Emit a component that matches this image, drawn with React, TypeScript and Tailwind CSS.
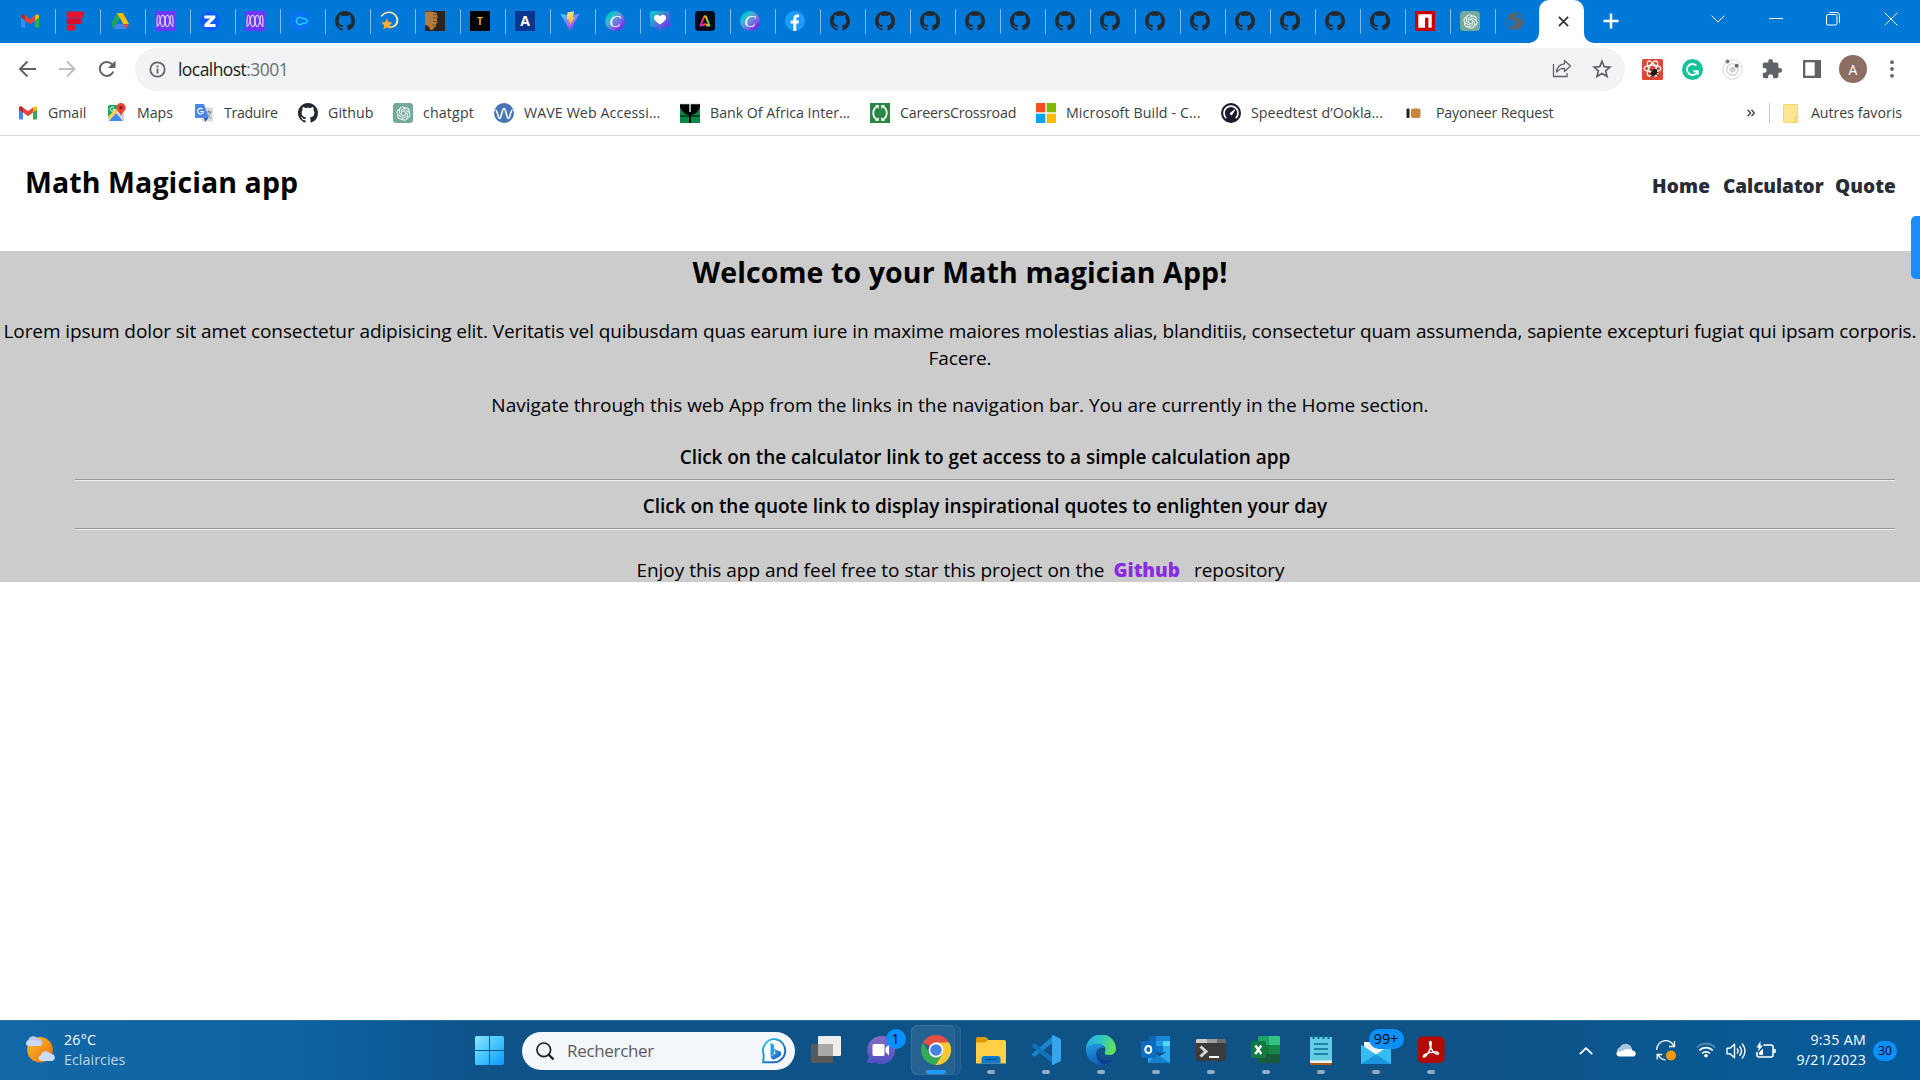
import type { ReactNode } from "react";
import { RiOpenaiFill } from "react-icons/ri";

type IconProps = { className?: string };

/* ---------- site icons ---------- */

const Gmail = ({ className = "size-5" }: IconProps) => (
  <svg viewBox="0 0 20 20" className={className}>
    <path d="M1 5.2V15.4a1.2 1.2 0 0 0 1.2 1.2H5V8.6z" fill="#4285f4" />
    <path d="M19 5.2V15.4a1.2 1.2 0 0 1-1.2 1.2H15V8.6z" fill="#34a853" />
    <path d="M15 4.6v4.8l4-3V5c0-1.7-1.9-2.4-3-1.3z" fill="#fbbc04" />
    <path d="M5 9.4V4.4l5 3.8 5-3.8v5l-5 3.8z" fill="#ea4335" />
    <path d="M1 5v1.4l4 3V4.4l-1-.7C2.900 2.800 1 3.300 1 5z" fill="#c5221f" />
  </svg>
);

const RedBars = () => (
  <svg viewBox="0 0 20 20" className="size-5">
    <path d="M2.500.5h16q.7 0 .7.7L18.500 6q-.1.700-.8.700H2.500q-.8 0-.8-.8V1.300q0-.8.8-.8z" fill="#e8122f" />
    <path d="M2.500 7.300H16q.7 0 .7.700l-.4 4.300q-.1.700-.8.700h-13q-.8 0-.8-.8V8.100q0-.8.8-.8z" fill="#d80f2b" />
    <path d="M2.500 13.600h7q.7 0 .7.700l-.4 4.400q-.1.700-.8.700H2.500q-.8 0-.8-.8v-4.200q0-.8.8-.8z" fill="#e8122f" />
  </svg>
);

const Drive = () => (
  <svg viewBox="0 0 20 20" className="size-5">
    <path d="M7 2h6L4 18 1 13z" fill="#1ea362" />
    <path d="M7 2h6l6 11h-6z" fill="#fbbc04" />
    <path d="M6.500 13H19l-3 5H4z" fill="#4285f4" />
    <path d="M13.500 13H19l-3 5z" fill="#ea4335" />
    <path d="M10 7.300 6.800 13h6.300z" fill="#0078d7" />
  </svg>
);

const PurpleM = () => (
  <svg viewBox="0 0 20 20" className="size-5">
    <rect width="20" height="20" fill="#6f36ff" />
    <g fill="none" stroke="#dccfff" strokeWidth="1.200">
      <path d="M1.800 15.500C3.500 15.500 4.500 12 5 9.500S6.300 4.300 7.600 4.300 9.800 7 9.800 10s-1 5.600-2.300 5.600S5.600 12.500 5.200 10" />
      <path d="M18.200 15.500c-1.700 0-2.700-3.500-3.200-6s-1.300-5.200-2.600-5.200S10.200 7 10.200 10s1 5.600 2.300 5.600 1.900-3.100 2.300-5.600" />
      <path d="M5.200 10C4.900 7 4.600 4.400 3.600 4.400S2 8 2 10.500s0 4 .3 5M14.800 10c.3-3 .6-5.600 1.600-5.600S18 8 18 10.500s0 4-.3 5" />
    </g>
  </svg>
);

const ZBadge = () => (
  <svg viewBox="0 0 20 20" className="size-5">
    <circle cx="10" cy="10" r="10" fill="#0b5cff" />
    <path d="M4.300 4.500h11v2.600l-5.800 6h6v2.900H4.400v-2.700l5.700-5.900H4.300z" fill="#fff" />
  </svg>
);

const ClickRing = () => (
  <svg viewBox="0 0 20 20" className="size-5">
    <circle cx="10" cy="10" r="10" fill="#0a73f5" />
    <path d="M12.800 7.800a3.600 3.600 0 1 0 0 4.400M12 7.600h3.200l2.300 2.400-2.300 2.400H12" fill="none" stroke="#16d8f5" strokeWidth="1.400" strokeLinejoin="round" />
  </svg>
);

const GithubMark = ({ className = "size-5" }: IconProps) => (
  <svg viewBox="0 0 16 16" className={className} fill="#24292f">
    <path d="M8 0C3.580 0 0 3.580 0 8c0 3.540 2.290 6.530 5.470 7.590.4.070.55-.17.55-.38 0-.19-.01-.82-.01-1.490-2.010.37-2.530-.49-2.690-.94-.09-.23-.48-.94-.82-1.130-.28-.15-.68-.52-.01-.53.63-.01 1.080.58 1.230.82.72 1.210 1.870.87 2.330.66.07-.52.28-.87.51-1.070-1.780-.2-3.640-.89-3.640-3.950 0-.87.31-1.590.82-2.150-.08-.2-.36-1.020.08-2.120 0 0 .67-.21 2.200.82.64-.18 1.320-.27 2-.27s1.360.09 2 .27c1.530-1.040 2.200-.82 2.200-.82.44 1.100.16 1.920.08 2.120.51.56.82 1.270.82 2.150 0 3.070-1.870 3.750-3.650 3.950.29.25.54.73.54 1.480 0 1.070-.01 1.930-.01 2.200 0 .21.15.46.55.38A8.010 8.010 0 0 0 16 8c0-4.420-3.580-8-8-8z" />
  </svg>
);

const DizzyStar = () => (
  <svg viewBox="0 0 20 20" className="size-5 overflow-visible">
    <path d="M1.500 5C5 .8 12-.5 15.500 4.500s2.500 11-5 11.500" fill="none" stroke="#ffe3a0" strokeWidth="1.500" strokeLinecap="round" />
    <path d="M14.500 3.500c3.500 3.500 3 10.500-4 12.500 7 .500 8.500-6 7.500-9-.7-2-2-3-3.500-3.500z" fill="#ffe3a0" />
    <path d="m7 7.500 1.700 3.600 4 .4-3 2.600 1 4.200L7 16.200l-3.600 2.100.8-4.200L1 11.500l4.200-.4z" fill="#ffac33" />
  </svg>
);

const Fist = () => (
  <svg viewBox="0 0 20 20" className="size-5">
    <rect width="20" height="20" fill="#2b241f" />
    <path d="M0 1c4-1 9 0 12 1l.6 5-.8 1 .7 4-1.300 1-.5 3-1.700.5-1 2-3 .5Q5 15 0 14z" fill="#b57a3e" />
    <path d="M8 3.500h4M8 7h4M8 10.500h4M7 14h4" stroke="#6b431f" strokeWidth="0.800" />
  </svg>
);

const LetterTile = ({ letter, tone }: { letter: string; tone: string }) => (
  <span className={`flex size-5 items-center justify-center font-['Open_Sans'] leading-none ${tone}`}>{letter}</span>
);

const Vite = () => (
  <svg viewBox="0 0 20 20" className="size-5">
    <defs>
      <linearGradient id="vite-a" x1="0" y1="0" x2="0.6" y2="1">
        <stop offset="0" stopColor="#41d1ff" />
        <stop offset="1" stopColor="#bd34fe" />
      </linearGradient>
      <linearGradient id="vite-b" x1="0" y1="0" x2="0" y2="1">
        <stop offset="0" stopColor="#ffea83" />
        <stop offset="1" stopColor="#ffa800" />
      </linearGradient>
    </defs>
    <path d="M.3 2.800 10 19.800l9.700-17L10.500 4.500z" fill="url(#vite-a)" />
    <path d="m14.200.2-6.800 1.300-.5 7.200 2.200-.4-.6 3 1.600-.5-1 4.500L15 6.300l-2.500.4z" fill="url(#vite-b)" />
  </svg>
);

const Canva = () => (
  <span className="flex size-5 items-center justify-center rounded-full bg-linear-to-br from-[#00c4cc] from-25% to-[#7d2ae8] to-80% font-['Liberation_Serif'] text-[17px] leading-none italic text-white">
    C
  </span>
);

const HeartChat = () => (
  <svg viewBox="0 0 20 20" className="size-5">
    <defs>
      <linearGradient id="heart-a" x1="0" y1="0" x2="1" y2="1">
        <stop offset="0.1" stopColor="#0fc5c9" />
        <stop offset="0.85" stopColor="#7c33e8" />
      </linearGradient>
    </defs>
    <path d="M2 0h16a2 2 0 0 1 2 2v12a2 2 0 0 1-2 2h-5l-3 4-3-4H2a2 2 0 0 1-2-2V2a2 2 0 0 1 2-2z" fill="url(#heart-a)" />
    <path d="M10 13.500C5 10 4 8.500 4 6.800 4 3.600 8.500 2.700 10 5.600c1.500-2.900 6-2 6 1.200 0 1.700-1 3.200-6 6.700z" fill="#fff" />
  </svg>
);

const RainbowA = () => (
  <svg viewBox="0 0 20 20" className="size-5">
    <defs>
      <linearGradient id="rb" x1="0" y1="1" x2="1" y2="0.8">
        <stop offset="0" stopColor="#b32bff" />
        <stop offset="0.3" stopColor="#ff2d55" />
        <stop offset="0.55" stopColor="#ff5a1f" />
        <stop offset="0.75" stopColor="#ffd000" />
        <stop offset="1" stopColor="#2fd06a" />
      </linearGradient>
    </defs>
    <rect width="20" height="20" rx="3.500" fill="#000b1d" />
    <path d="M5.500 14.500 8.800 6.300q1.200-2 2.400 0l3.300 8.200h-2q-2.500-2.500-4.700-.2z" fill="none" stroke="url(#rb)" strokeWidth="2" strokeLinejoin="round" />
  </svg>
);

const Facebook = () => (
  <svg viewBox="0 0 20 20" className="size-5">
    <circle cx="10" cy="10" r="10" fill="#1b9bfa" />
    <path d="M8.300 20v-7.500H5.700V9.600h2.600V7.500c0-2.700 1.500-4 3.800-4 .9 0 1.700.1 2 .2v2.600h-1.300c-1.100 0-1.500.6-1.500 1.500v1.800h2.700l-.5 2.900h-2.200V20z" fill="#fff" />
  </svg>
);

const Npm = () => (
  <svg viewBox="0 0 20 20" className="size-5">
    <rect width="20" height="20" fill="#cb0000" />
    <path d="M3.300 3.300h13.400v13.400h-3.300V6.700h-3.300v10H3.300z" fill="#fff" />
  </svg>
);

const ChatGpt = ({ className = "rounded-[3px]" }: IconProps) => (
  <span className={`flex size-5 items-center justify-center bg-[#74aa9c] ${className}`}>
    <RiOpenaiFill className="size-[17px] text-white" />
  </span>
);

const Globe = () => (
  <svg viewBox="0 0 20 20" className="size-5">
    <circle cx="10" cy="10" r="8.700" fill="#5f6368" />
    <path d="M3 8.500q2.500-.5 4 .5 2 1 3.500.500 1 1.500-.5 2.500-1.500.5-1.500 2 .5 1.500 0 2.700C5 16 3 13 3 10zM9 3.500q2.500.2 2 2-.5 1.500 1.500 1.500 2.500.3 2.500 2 1 1.500 2 1 .3-4-2.500-5.700Q12 2.800 9 3.500z" fill="#0078d7" />
  </svg>
);

/* ---------- bookmark icons ---------- */

const Maps = () => (
  <svg viewBox="0 0 20 20" className="size-5">
    <rect x="1" y="2" width="16" height="16" rx="1.500" fill="#dfe5e3" />
    <path d="M2.500 2H13L1 14V3.500A1.500 1.500 0 0 1 2.500 2z" fill="#1fa463" />
    <path d="M9 10 2 18h14z" fill="#4688f1" />
    <path d="M1 14 12 3l2 2L2 17z" fill="#ffd04b" />
    <path d="m10 10 7 7v-6l-4-4z" fill="#c9d0ce" />
    <path d="M7 4.600a2.200 2.200 0 1 0 .6 1.700H5.600" fill="none" stroke="#fff" />
    <path d="M14 0a4.700 4.700 0 0 0-4.700 4.700C9.300 8 13 9 14 13c1-4 4.700-5 4.700-8.300A4.700 4.700 0 0 0 14 0z" fill="#ea4335" />
    <circle cx="14" cy="4.700" r="1.700" fill="#7a2018" />
  </svg>
);

const Translate = () => (
  <svg viewBox="0 0 20 20" className="size-5">
    <rect x="8" y="4.500" width="11" height="14" rx="1" fill="#dcdcdc" />
    <path d="M11.500 9h6M14.500 7.500V9m2 0c-.5 2.500-2.500 4.500-4 5.500m0-4.500c.8 2 2.500 4 4.300 5" fill="none" stroke="#607d8b" />
    <path d="M2 1h8l4.500 14H2a1 1 0 0 1-1-1V2a1 1 0 0 1 1-1z" fill="#4a85ee" />
    <path d="m10 15 4.500 0-3.500 4z" fill="#3458b0" />
    <path d="M8.500 6.200a2.800 2.800 0 1 0 .8 2.300H6.500" fill="none" stroke="#fff" strokeWidth="1.200" />
  </svg>
);

const Wave = () => (
  <svg viewBox="0 0 20 20" className="size-5">
    <circle cx="10" cy="10" r="10" fill="#4775b8" />
    <path d="M1.500 7c1.800 0 2.500 8.500 4.200 8.500S8 5.500 10 5.500s2.600 10 4.300 10S16.800 7 18.500 7" fill="none" stroke="#fff" strokeWidth="1.600" />
  </svg>
);

const BankAfrica = () => (
  <svg viewBox="0 0 20 20" className="size-5">
    <rect width="20" height="20" fill="#038a45" />
    <path d="M0 1h20v3q-2.500 7-9 8v8H9v-8Q2.500 11 0 4z" fill="#000" />
    <path d="M0 13h20" stroke="#000" strokeWidth="1" />
    <path d="M0 0h20v1.200H0zM9.300 1h1.400v8H9.300z" fill="#e8f3ec" />
  </svg>
);

const Careers = () => (
  <svg viewBox="0 0 20 20" className="size-5">
    <rect width="20" height="20" fill="#2a8644" />
    <path d="M7 3.500a7.500 7.500 0 0 0 0 13M13 3.500a7.500 7.500 0 0 1 0 13" fill="none" stroke="#fff" strokeWidth="1.800" />
    <path d="M5 2h3.700v4zM15 2h-3.700v4zM5 18h3.700v-4zM15 18h-3.700v-4z" fill="#fff" />
  </svg>
);

const Microsoft = () => (
  <svg viewBox="0 0 20 20" className="size-5">
    <path d="M0 0h9.300v9.300H0z" fill="#f25022" />
    <path d="M10.700 0H20v9.300h-9.300z" fill="#7fba00" />
    <path d="M0 10.700h9.300V20H0z" fill="#00a4ef" />
    <path d="M10.700 10.700H20V20h-9.300z" fill="#ffb900" />
  </svg>
);

const Speedtest = () => (
  <svg viewBox="0 0 20 20" className="size-5">
    <circle cx="10" cy="10" r="10" fill="#1a1b2e" />
    <path d="M5.200 15.200a7 7 0 1 1 9.600 0" fill="none" stroke="#fff" strokeWidth="1.800" />
    <path d="m13.800 6.800-3.200 5.200-1.700-1.500z" fill="#fff" stroke="#fff" strokeLinejoin="round" />
  </svg>
);

const Payoneer = () => (
  <svg viewBox="0 0 20 20" className="size-5">
    <rect x="0.500" y="5.500" width="3" height="9.500" rx="1" fill="#222" />
    <rect x="5" y="5.500" width="9.500" height="9.500" rx="2" fill="#c4873d" />
  </svg>
);

/* ---------- tab strip ---------- */

const tabIcons: ReactNode[] = [
  <Gmail />,
  <RedBars />,
  <Drive />,
  <PurpleM />,
  <ZBadge />,
  <PurpleM />,
  <ClickRing />,
  <GithubMark />,
  <DizzyStar />,
  <Fist />,
  <LetterTile letter="T" tone="bg-black text-[#e8b21c] text-[10px] font-bold" />,
  <LetterTile letter="A" tone="bg-[#0b3490] text-white text-[14px] font-bold" />,
  <Vite />,
  <Canva />,
  <HeartChat />,
  <RainbowA />,
  <Canva />,
  <Facebook />,
  ...Array.from({ length: 13 }, () => <GithubMark />),
  <Npm />,
  <ChatGpt className="rounded-[4px]" />,
  <Globe />,
];

const TabStrip = () => (
  <div className="flex h-[43px] bg-[#0078d7] pl-2.5">
    {tabIcons.map((icon, i) => (
      <div key={i} className="flex h-[42px] w-[45px] shrink-0 items-center">
        <span className={i === 0 ? "h-[25px] w-px" : "mt-px h-[25px] w-px bg-[#7fbbeb]"} />
        <span className="ml-[9px]">{icon}</span>
      </div>
    ))}
    <div className="-ml-px flex h-[43px] items-end">
      <svg viewBox="0 0 10 10" className="-ml-2.5 size-2.5 fill-white">
        <path d="M10 0v10H0A10 10 0 0 0 10 0z" />
      </svg>
      <div className="flex h-[43px] w-[45px] items-center justify-center rounded-t-[10px] bg-white pb-px pl-1">
        <svg viewBox="0 0 12 12" className="size-[11px] stroke-[#33373b] stroke-2">
          <path d="m1 1 10 10M11 1 1 11" />
        </svg>
      </div>
      <svg viewBox="0 0 10 10" className="size-2.5 fill-white">
        <path d="M0 0v10h10A10 10 0 0 1 0 0z" />
      </svg>
    </div>
    <svg viewBox="0 0 16 16" className="mt-[13px] ml-[9px] size-4 stroke-white stroke-[2.500]">
      <path d="M8 .5v15M.5 8h15" />
    </svg>
    <div className="ml-auto flex h-[37px] items-center pr-[22px]">
      <svg viewBox="0 0 14 8" className="mr-11 h-2 w-[14px] fill-none stroke-white">
        <path d="m.7.7 6.300 6.300L13.300.7" />
      </svg>
      <span className="mr-[43px] h-px w-[14px] bg-white" />
      <svg viewBox="0 0 14 14" className="mr-11 size-[14px] fill-none stroke-white">
        <rect x="0.500" y="2.500" width="10.500" height="10.500" rx="1.500" />
        <path d="M3 .5h7.500a3 3 0 0 1 3 3V11" />
      </svg>
      <svg viewBox="0 0 14 14" className="size-[14px] stroke-white">
        <path d="m.7.7 12.600 12.600M13.300.7.700 13.300" />
      </svg>
    </div>
  </div>
);

/* ---------- toolbar ---------- */

const Toolbar = () => (
  <div className="flex h-[52px] items-center bg-white pl-[17px]">
    <svg viewBox="0 0 20 20" className="size-5 fill-none stroke-[#5f6368] stroke-2">
      <path d="M19 10H3M10.500 2.500 3 10l7.500 7.500" />
    </svg>
    <svg viewBox="0 0 20 20" className="ml-5 size-5 fill-none stroke-[#bdc0c3] stroke-2">
      <path d="M2 10h16M10 2.500l7.500 7.500-7.500 7.500" />
    </svg>
    <svg viewBox="0 0 20 20" className="ml-[20px] size-5 fill-none stroke-[#5f6368] stroke-2">
      <path d="M16.300 12.500A7 7 0 1 1 15 5.200l1.500 1.700" />
      <path d="M18.500 1.500V9H11z" fill="#5f6368" stroke="none" />
    </svg>
    <div className="ml-[18px] flex h-[43px] w-[1490px] items-center rounded-full bg-[#f1f3f4] pr-[13px] pl-[14px]">
      <svg viewBox="0 0 18 18" className="size-[17px] fill-none stroke-[#5f6368] stroke-[1.900]">
        <circle cx="9" cy="9" r="7.600" />
        <path d="M9 8v5.200M9 4.800v1.900" />
      </svg>
      <span className="ml-[12px] text-[17.500px] leading-6 tracking-[-0.560px] text-[#202124]">
        localhost<span className="text-[#6b7075]">:3001</span>
      </span>
      <svg viewBox="0 0 20 20" className="ml-auto size-5 fill-none stroke-[#5f6368] stroke-[1.300]">
        <path d="M1.500 5v12.500H15V14" />
        <path d="M12.500 1.500 18.500 7l-6 5.500V9.300C9 9.300 6.500 10.500 4.500 13c.5-4.500 3.500-7.700 8-8.200z" strokeLinejoin="round" />
      </svg>
      <svg viewBox="0 0 20 20" className="ml-[20px] size-5 fill-none stroke-[#5f6368] stroke-[1.700]">
        <path d="m10 2.300 2.200 5.300 5.800.5-4.400 3.700 1.400 5.600-5-3-5 3 1.400-5.600L2 8.100l5.800-.5z" />
      </svg>
    </div>
    <div className="flex flex-1 items-center pl-[17px]">
      <svg viewBox="0 0 21 21" className="size-[21px]">
        <rect width="21" height="21" rx="1.500" fill="#db4a39" />
        <g fill="none" stroke="#fff" strokeWidth="1.200">
          <ellipse cx="10.500" cy="9.500" rx="8.500" ry="3.400" />
          <ellipse cx="10.500" cy="9.500" rx="8.500" ry="3.400" transform="rotate(60 10.500 9.500)" />
          <ellipse cx="10.500" cy="9.500" rx="8.500" ry="3.400" transform="rotate(-60 10.500 9.500)" />
        </g>
        <ellipse cx="12" cy="13.500" rx="2.700" ry="3.800" transform="rotate(35 12 13.500)" fill="#1a1a1a" />
        <path d="m7.500 10 9 7M15.500 9.500 9 18M8 14.500l8-1" stroke="#1a1a1a" />
      </svg>
      <svg viewBox="0 0 21 21" className="ml-[19px] size-[21px]">
        <circle cx="10.500" cy="10.500" r="10.500" fill="#15c39a" />
        <path d="M14.300 6.600a5.500 5.500 0 1 0 .6 7.200M11.500 12.300h4.300v3.400" fill="none" stroke="#fff" strokeWidth="1.900" />
      </svg>
      <svg viewBox="0 0 21 21" className="ml-[19px] size-[21px] fill-none stroke-[#d9d9d9]">
        <circle cx="10.500" cy="10.500" r="9.700" />
        <circle cx="10.500" cy="10.500" r="5.800" strokeWidth="1.600" />
        <circle cx="10.500" cy="10.500" r="2.800" fill="#cfcfcf" />
        <circle cx="5.500" cy="2.500" r="2" fill="#7a7a7a" stroke="none" />
        <circle cx="14.700" cy="6.800" r="2" fill="#6a6a6a" stroke="none" />
      </svg>
      <svg viewBox="0 0 24 24" className="ml-[18px] size-[22px] fill-[#5f6368]">
        <path d="M20.500 11H19V7c0-1.100-.9-2-2-2h-4V3.500a2.500 2.500 0 0 0-5 0V5H4c-1.100 0-2 .9-2 2v3.800h1.500a2.700 2.700 0 0 1 0 5.400H2V20c0 1.100.9 2 2 2h3.800v-1.500a2.700 2.700 0 0 1 5.400 0V22H17c1.100 0 2-.9 2-2v-4h1.500a2.500 2.500 0 0 0 0-5z" />
      </svg>
      <svg viewBox="0 0 18 18" className="ml-5 size-[18px]">
        <path d="M0 0h18v18H0z" fill="#5f6368" />
        <path d="M2.300 2.300h9.400v13.400H2.300z" fill="#fff" />
      </svg>
      <span className="ml-[18px] flex size-7 items-center justify-center rounded-full bg-[#8d6e63] text-[14px] text-white">A</span>
      <svg viewBox="0 0 4 18" className="ml-[23px] h-[18px] w-1 fill-[#5f6368]">
        <circle cx="2" cy="2.200" r="1.900" />
        <circle cx="2" cy="9" r="1.900" />
        <circle cx="2" cy="15.800" r="1.900" />
      </svg>
    </div>
  </div>
);

/* ---------- bookmarks ---------- */

const bookmarks: { label: string; icon: ReactNode; box: string }[] = [
  { label: "Gmail", icon: <Gmail />, box: "w-[89px] tracking-[-0.04px]" },
  { label: "Maps", icon: <Maps />, box: "w-[87px] tracking-[-0.02px]" },
  { label: "Traduire", icon: <Translate />, box: "w-[104px] tracking-[-0.34px]" },
  { label: "Github", icon: <GithubMark />, box: "w-[95px] tracking-[0.07px]" },
  { label: "chatgpt", icon: <ChatGpt />, box: "w-[101px] tracking-[0.15px]" },
  { label: "WAVE Web Accessi...", icon: <Wave />, box: "w-[186px] tracking-[0.11px]" },
  { label: "Bank Of Africa Inter...", icon: <BankAfrica />, box: "w-[190px] tracking-[-0.02px]" },
  { label: "CareersCrossroad", icon: <Careers />, box: "w-[166px] tracking-[-0.16px]" },
  { label: "Microsoft Build - C...", icon: <Microsoft />, box: "w-[185px] tracking-[0.11px]" },
  { label: "Speedtest d’Ookla...", icon: <Speedtest />, box: "w-[185px] tracking-[0.08px]" },
  { label: "Payoneer Request", icon: <Payoneer />, box: "w-[160px] tracking-[-0.16px]" },
];

const BookmarksBar = () => (
  <div className="flex h-[41px] items-center border-b border-[#dadce0] bg-white pb-1 pl-[18px] text-[14.2px] leading-5 text-[#3c4043]">
    {bookmarks.map((b) => (
      <div key={b.label} className={`flex shrink-0 items-center gap-2.5 whitespace-nowrap ${b.box}`}>
        {b.icon}
        <span>{b.label}</span>
      </div>
    ))}
    <div className="ml-auto flex items-center pr-[18px]">
      <svg viewBox="0 0 8 8" className="size-2 fill-none stroke-[#4a4e52] stroke-[1.500]">
        <path d="m.7.7 2.800 3.300L.7 7.300M4.500.7l2.800 3.300-2.800 3.300" />
      </svg>
      <span className="ml-[14px] h-5 w-px bg-[#c6c9cd]" />
      <svg viewBox="0 0 16 19" className="ml-[13px] h-[19px] w-4">
        <path d="M1.500.5h12a1 1 0 0 1 1 1v10.500h.3v6.500H1.500a1 1 0 0 1-1-1v-16a1 1 0 0 1 1-1z" fill="#ffe694" stroke="#f9d75f" />
        <path d="M12 18.500v-4.500q0-1.500 2.500-1.500" fill="none" stroke="#f4cd4c" />
      </svg>
      <span className="ml-[12px] tracking-[-0.02px]">Autres favoris</span>
    </div>
  </div>
);

/* ---------- web page ---------- */

const WebPage = () => (
  <div className="relative flex-1 bg-white text-[19px] leading-[27px] text-black">
    <header className="flex h-[115px] justify-between pr-6 pl-[25px]">
      <h1 className="pt-[25px] text-[28.5px] leading-[42px] font-bold tracking-[0.1px]">Math Magician app</h1>
      <nav className="flex pt-[37px] font-extrabold text-[#282c34]">
        <a className="w-[71px] tracking-[0.2px]">Home</a>
        <a className="w-[112px] tracking-[-0.05px]">Calculator</a>
        <a className="w-[61px] tracking-[0.1px]">Quote</a>
      </nav>
    </header>
    <section className="h-[331px] bg-[#ccc] text-center">
      <h2 className="text-[28.5px] leading-[42px] font-bold tracking-[0.11px]">Welcome to your Math magician App!</h2>
      <p className="mt-[25px] tracking-[-0.095px]">
        Lorem ipsum dolor sit amet consectetur adipisicing elit. Veritatis vel quibusdam quas earum iure in maxime
        maiores molestias alias, blanditiis, consectetur quam assumenda, sapiente excepturi fugiat qui ipsam corporis.
        <br />
        Facere.
      </p>
      <p className="mt-5">
        Navigate through this web App from the links in the navigation bar. You are currently in the Home section.
      </p>
      <ul className="mt-[25px] mr-[25px] ml-[75px] font-semibold">
        <li className="tracking-[-0.047px]">Click on the calculator link to get access to a simple calculation app</li>
        <li className="mt-2 h-0.5 border-t border-b border-t-[#969696] border-b-[#eee]" />
        <li className="mt-3 tracking-[-0.04px]">
          Click on the quote link to display inspirational quotes to enlighten your day
        </li>
        <li className="mt-2 h-0.5 border-t border-b border-t-[#969696] border-b-[#eee]" />
      </ul>
      <p className="mt-7 pl-px leading-[25px] tracking-[-0.02px]">
        Enjoy this app and feel free to star this project on the
        <a className="mr-[14px] ml-[9px] font-extrabold text-[#8a2be2]">Github</a>
        repository
      </p>
    </section>
    <div className="absolute top-20 right-0 h-[63px] w-[9px] rounded-l-[5px] bg-[#1a8cff]" />
  </div>
);

/* ---------- taskbar ---------- */

const Weather = () => (
  <svg viewBox="0 0 30 28" className="-mt-1 h-7 w-[30px]">
    <defs>
      <linearGradient id="sun" x1="0" y1="0" x2="1" y2="1">
        <stop offset="0.1" stopColor="#f9b82b" />
        <stop offset="0.9" stopColor="#f3700b" />
      </linearGradient>
    </defs>
    <circle cx="15" cy="14.800" r="12.800" fill="url(#sun)" />
    <path d="M3 11a3.200 3.200 0 0 1 .3-6 5.200 5.200 0 0 1 9.400-1.200A3.800 3.800 0 0 1 15 11z" fill="#b9c9ee" />
    <path d="M3 11a2.600 2.600 0 0 1 0-5q6-2 9 0a2.600 2.600 0 0 1 3 5z" fill="#ccd9f6" />
    <path d="M15.500 26a3.200 3.200 0 0 1 .3-6 5.200 5.200 0 0 1 9.400-1.200A3.800 3.800 0 0 1 27.500 26z" fill="#cddbf7" />
  </svg>
);

const WindowsLogo = () => (
  <svg viewBox="0 0 29 29" className="size-[29px]">
    <defs>
      <linearGradient id="win" x1="0" y1="0" x2="29" y2="29" gradientUnits="userSpaceOnUse">
        <stop offset="0" stopColor="#8ae3ff" />
        <stop offset="0.5" stopColor="#41c6fe" />
        <stop offset="1" stopColor="#0a97ff" />
      </linearGradient>
    </defs>
    <path d="M1 0h13v14H0V1zM15 0h13l1 1v13H15zM0 15h14v14H1l-1-1zM15 15h14v13l-1 1H15z" fill="url(#win)" />
  </svg>
);

const Bing = () => (
  <svg viewBox="0 0 26 26" className="size-[26px]">
    <defs>
      <linearGradient id="bing" x1="0" y1="0" x2="1" y2="1">
        <stop offset="0" stopColor="#2bc4e8" />
        <stop offset="1" stopColor="#1b48c8" />
      </linearGradient>
    </defs>
    <path d="M13.200 1.200A11.500 11.500 0 1 1 10 24.200H1.200L1.800 17A11.500 11.500 0 0 1 13.200 1.200z" fill="#fff" stroke="url(#bing)" strokeWidth="1.900" />
    <path d="m8.500 5 3.500 1.500v9.300l-3.500 2.500z" fill="#1ca4ea" />
    <path d="M8.500 18.300 13.500 15.500l-1.800-5 7 3.300c1.300 2.300.3 4-1.500 5L12 21.500q-2.500.5-3.500-3.200z" fill="url(#bing)" />
  </svg>
);

const TaskView = () => (
  <svg viewBox="0 0 30 30" className="size-[30px]">
    <rect y="9" width="22" height="19" rx="1" fill="#595959" />
    <rect x="7" y="1" width="23" height="20" rx="1" fill="#ededed" />
    <path d="M7 9h15v12H7z" fill="#a9a9a9" />
  </svg>
);

const Chat = () => (
  <svg viewBox="0 0 30 30" className="size-[30px]">
    <defs>
      <linearGradient id="chat" x1="0" y1="0" x2="0" y2="1">
        <stop offset="0" stopColor="#8a6cc0" />
        <stop offset="1" stopColor="#4e50c4" />
      </linearGradient>
    </defs>
    <path d="M15 1a14 14 0 1 1-5 27H1.500q-1-.5-.5-1.500L3 22A14 14 0 0 1 15 1z" fill="url(#chat)" />
    <rect x="6.500" y="9" width="12" height="12" rx="1.500" fill="#fff" />
    <path d="m19.500 13 3.500-3.500v11L19.500 17z" fill="#fff" />
  </svg>
);

const Chrome = () => (
  <svg viewBox="0 0 30 30" className="size-[30px]">
    <path d="M15 15 2 7.500A15 15 0 0 1 28 7.500z" fill="#e33b2e" />
    <path d="M15 7.500h13A15 15 0 0 1 14.500 30L21.500 18.500z" fill="#fcc31e" />
    <path d="M2 7.500A15 15 0 0 0 14.500 30l7-11.500L15 15 8.500 18.700z" fill="#1fa446" />
    <circle cx="15" cy="15" r="7.400" fill="#fff" />
    <circle cx="15" cy="15" r="5.800" fill="#2f74e4" />
  </svg>
);

const Explorer = () => (
  <svg viewBox="0 0 30 30" className="size-[30px]">
    <path d="M0 3.500A1.500 1.500 0 0 1 1.500 2H10l3 3.500V9H0z" fill="#dc9a05" />
    <path d="M0 7.500h9L12 5h16.500A1.500 1.500 0 0 1 30 6.500v22H0z" fill="#ffcf48" />
    <path d="M5.500 28.500V24a3 3 0 0 1 3-3h13a3 3 0 0 1 3 3v4.500z" fill="#0b7ad1" />
    <path d="M9 24.500h12" stroke="#0a4e8e" strokeWidth="1.300" />
  </svg>
);

const VsCode = () => (
  <svg viewBox="0 0 30 30" className="size-[30px]">
    <path d="m.5 19.200 2.200 2q.8.500 1.500 0L23 6.800V0z" fill="#1a86d0" />
    <path d="m.5 10.800 2.200-2q.8-.5 1.500 0L23 23.200V30z" fill="#0f74bd" />
    <path d="m22 .1 7 3.300q1 .5 1 1.600v20q0 1.100-1 1.600l-7 3.300q-1 .2-1-1V1.100q0-1 1-1z" fill="#35a6ee" />
  </svg>
);

const Edge = () => (
  <svg viewBox="0 0 30 30" className="size-[30px]">
    <defs>
      <linearGradient id="edge-a" x1="0" y1="0.3" x2="1" y2="0.5">
        <stop offset="0" stopColor="#2aa9e8" />
        <stop offset="0.5" stopColor="#2fc8c0" />
        <stop offset="1" stopColor="#6ae24f" />
      </linearGradient>
      <linearGradient id="edge-b" x1="0" y1="0" x2="0.3" y2="1">
        <stop offset="0" stopColor="#1f9de4" />
        <stop offset="1" stopColor="#0f5fb8" />
      </linearGradient>
    </defs>
    <path d="M0 15A15 15 0 0 1 30 13.500c0 5-4 7-8 6.500-3-.3-4-1-3-3 1.800-4.500-1.500-7.500-6-7.500C6 9.500.5 13 0 15z" fill="url(#edge-a)" />
    <path d="M0 14.500C1 11 5.500 8.500 11 8.800c4 .2 6.500 2 7.500 4.200-5-1.500-7 1.500-6.500 5 .6 4.500 6 9 15.500 5.500A15 15 0 0 1 0 14.500z" fill="url(#edge-b)" />
    <path d="M12.500 13C9 17 9 25 17.500 29.700c4.500-.7 8-3.200 10-6.200C20 27 13.500 24 12 18.500c-.5-2.500 0-4 .5-5.500z" fill="#123f88" />
  </svg>
);

const Outlook = () => (
  <svg viewBox="0 0 30 30" className="size-[30px]">
    <path d="M8 1h21v17H8z" fill="#1066b5" />
    <path d="M15 1h14v5H15z" fill="#1b86d8" />
    <path d="M15 6h7v5h-7z" fill="#1f9be8" />
    <path d="M22 6h7v5h-7z" fill="#50d9ff" />
    <path d="M15 11h7v6h-7z" fill="#0f74c8" />
    <path d="M22 11h7v6h-7z" fill="#28a8ea" />
    <path d="M7 17v11h22V15l-11 6.500z" fill="#2ea6ea" />
    <path d="M7 28h22L15 19z" fill="#1580cb" />
    <rect y="6" width="15" height="17" rx="1.500" fill="#0b6cc4" />
    <ellipse cx="7.300" cy="14.500" rx="3" ry="3.600" fill="none" stroke="#fff" strokeWidth="2" />
  </svg>
);

const Terminal = () => (
  <svg viewBox="0 0 30 30" className="size-[30px]">
    <rect y="4" width="30" height="22" rx="1.500" fill="#3c3c3c" />
    <path d="M1.500 4H11v4H0V5.500A1.500 1.500 0 0 1 1.500 4z" fill="#cdcdcd" />
    <path d="M11 4h10v4H11z" fill="#9c9c9c" />
    <path d="M21 4h7.500A1.500 1.500 0 0 1 30 5.500V8h-9z" fill="#6b6b6b" />
    <path d="m4.500 11.500 5.500 5-5.500 5" fill="none" stroke="#d6d6d6" strokeWidth="3" />
    <path d="M13 22h10" stroke="#fff" strokeWidth="2" />
  </svg>
);

const Excel = () => (
  <svg viewBox="0 0 30 30" className="size-[30px]">
    <path d="M8 1h11v9H7V2z" fill="#21a366" />
    <path d="M18 1h10.500l.5 1v8H18z" fill="#33c481" />
    <path d="M7 10h11v9H7z" fill="#107c41" />
    <path d="M18 10h11v9H18z" fill="#17874a" />
    <path d="M7 19h22v8.500l-1 .5H8l-1-1z" fill="#185c37" />
    <rect y="6" width="15" height="17" rx="1.500" fill="#107c41" />
    <path d="m4.300 10.500 6 8.500M10.300 10.500l-6 8.500" stroke="#fff" strokeWidth="2.300" />
  </svg>
);

const Notepad = () => (
  <svg viewBox="0 0 30 30" className="size-[30px]">
    <rect x="4" y="24" width="22" height="6" rx="1.500" fill="#b8560f" />
    <rect x="4" y="2" width="22" height="26" rx="1" fill="#f5f5f5" />
    <rect x="4" y="2" width="22" height="23.500" rx="1" fill="#63cbe4" />
    <path d="M7.500 0v4M12.500 0v4M17.500 0v4M22.500 0v4" stroke="#0e6b8c" strokeWidth="2" />
    <path d="M8 9h14M8 14h14M8 19h14" stroke="#0c6c96" strokeWidth="1.700" />
  </svg>
);

const Mail = () => (
  <svg viewBox="0 0 30 30" className="size-[30px]">
    <path d="M0 10 15 1l15 9v6H0z" fill="#0a4d9b" />
    <path d="M3 7h24v11l-12 5L3 18z" fill="#f3f3f3" />
    <path d="M0 9.500 15 19.500l15-10V29H0z" fill="#35bdf2" />
    <path d="M0 29 15 19.500 30 29z" fill="#1b97e0" />
  </svg>
);

const Acrobat = () => (
  <svg viewBox="0 0 30 30" className="size-[30px]">
    <rect x="1.500" y="1.500" width="27" height="26.500" rx="5" fill="#b30b00" />
    <path
      d="M14.500 6.500c-1.500 0-1 3.500.5 6.500s4.500 6.500 6.500 6.300c1.800-.2 1.200-2.100-1.500-2.300-3.500-.3-8 .8-11 2.500-2 1.200-2 2.700-.8 2.500 2-.3 4.800-5 6-8.500 1-3 1.500-7 .3-7z"
      fill="none"
      stroke="#fff"
      strokeWidth="1.500"
    />
  </svg>
);

const TaskApp = ({ children, open = true }: { children: ReactNode; open?: boolean }) => (
  <div className="relative flex h-[60px] w-[55px] shrink-0 flex-col items-center pt-[15px]">
    {children}
    {open && <span className="mt-[5px] h-1 w-2 rounded-full bg-[#93adc4]" />}
  </div>
);

const Taskbar = () => (
  <footer className="flex h-[60px] border-t border-[#2a6c98] bg-[linear-gradient(90deg,#1267a6_0%,#0f64a3_15%,#0c5b98_20%,#0e5287_26%,#0e5286_75%,#0a5890_88%,#055b9b_100%)] text-white">
    <div className="flex w-[475px] items-center pl-[25px] text-[14.2px] leading-5">
      <Weather />
      <div className="-mt-px pl-[9px]">
        <div className="tracking-[0.25px]">26°C</div>
        <div className="tracking-[0.08px] text-[#bdd6e8]">Eclaircies</div>
      </div>
    </div>
    <div className="flex items-center">
      <WindowsLogo />
      <div className="ml-[18px] flex h-[38px] w-[273px] items-center rounded-full bg-[#f3f6fa] pr-[7px] pl-[14px]">
        <svg viewBox="0 0 18 18" className="size-[18px] fill-none stroke-[#222]">
          <circle cx="7.800" cy="7.800" r="6.800" strokeWidth="1.700" />
          <path d="m12.500 12.500 5 5" strokeWidth="2.300" />
        </svg>
        <span className="ml-[13px] text-[17px] tracking-[-0.32px] text-[#5c5c5c]">Rechercher</span>
        <span className="ml-auto">
          <Bing />
        </span>
      </div>
    </div>
    <div className="-mt-px ml-[3.500px] flex">
      <TaskApp open={false}>
        <TaskView />
      </TaskApp>
      <TaskApp open={false}>
        <Chat />
        <span className="absolute top-[9px] right-[3px] flex size-5 items-center justify-center rounded-full bg-[#0a90ff] text-[14px] leading-5 text-black">
          1
        </span>
      </TaskApp>
      <div className="relative flex h-[60px] w-[55px] flex-col items-center pt-[15px]">
        <div className="absolute top-[5px] left-[2px] h-[50px] w-[50px] rounded-md border border-white/5 bg-white/5" />
        <div className="absolute top-[5px] left-[2px] h-[50px] w-11 rounded-md border border-white/5 bg-white/5" />
        <Chrome />
        <span className="mt-[5px] h-1 w-5 rounded-full bg-[#0a90ff]" />
      </div>
      <TaskApp><Explorer /></TaskApp>
      <TaskApp><VsCode /></TaskApp>
      <TaskApp><Edge /></TaskApp>
      <TaskApp><Outlook /></TaskApp>
      <TaskApp><Terminal /></TaskApp>
      <TaskApp><Excel /></TaskApp>
      <TaskApp><Notepad /></TaskApp>
      <TaskApp>
        <Mail />
        <span className="absolute top-[9px] left-[20px] flex h-5 w-[35px] items-center justify-center rounded-full bg-[#0a90ff] text-[14.2px] leading-5 text-black">
          99+
        </span>
      </TaskApp>
      <TaskApp><Acrobat /></TaskApp>
    </div>
    <div className="ml-auto flex items-center pr-[23px]">
      <svg viewBox="0 0 14 8" className="h-2 w-[14px] fill-none stroke-white stroke-[1.800]">
        <path d="m.8 7.200 6.200-6 6.200 6" />
      </svg>
      <svg viewBox="0 0 20 14" className="-mt-0.5 ml-[23px] h-[14px] w-5">
        <path d="M4 12a4 4 0 0 1 0-7.700 6.300 6.300 0 0 1 11.700.8L17 11z" fill="#a9c3da" />
        <path d="M3.500 13.500C0 13.300-.5 9.500 2 8.300 6 10 8 5.200 12 6.500c1.500-.8 3.500-.7 4.500 1 4 .3 4.500 5.500.5 6z" fill="#fff" />
      </svg>
      <svg viewBox="0 0 20 21" className="-mt-px ml-5 h-[21px] w-5 fill-none stroke-white stroke-[1.300]">
        <path d="M.8 10A9 9 0 0 1 18 6M18.500 1v5.500H13M9.500 19.800A9 9 0 0 1 2 14.500M1.200 19.500v-5h5" />
        <circle cx="15" cy="15.500" r="5" fill="#ff9a0a" stroke="none" />
      </svg>
      <svg viewBox="0 0 20 16" className="-mt-0.5 ml-5 h-4 w-5 fill-none stroke-white stroke-[1.700]">
        <path d="M.8 5.500a13 13 0 0 1 18.400 0" className="stroke-white/30" />
        <path d="M3.300 8.500a9.300 9.300 0 0 1 13.400 0M6 11.500a5.600 5.600 0 0 1 8 0" />
        <circle cx="10" cy="13.800" r="1.800" fill="#fff" stroke="none" />
      </svg>
      <svg viewBox="0 0 20 18" className="ml-2.5 h-[18px] w-5 fill-none stroke-white stroke-[1.400]">
        <path d="M1 6.300h3l4.500-4v13.400l-4.500-4H1z" strokeLinejoin="round" />
        <path d="M11 6.500q2 2.500 0 5M13.500 4.200q4 4.800 0 9.600M16 1.500q6 7.500 0 15" />
      </svg>
      <svg viewBox="0 0 20 18" className="-mt-0.5 ml-2.5 h-[18px] w-5 fill-none stroke-white stroke-[1.600]">
        <path d="M7.500 4H15a2 2 0 0 1 2 2v8a2 2 0 0 1-2 2H3a2 2 0 0 1-2-2v-3" />
        <path d="M18.700 8v4" strokeWidth="2" />
        <path d="M4.500 0 .5 6.500h2.300L2 10.500l5-6H4.500zM3 14l0-2.500 4-4V14z" fill="#fff" stroke="none" />
      </svg>
      <div className="-mt-px ml-5 w-[70px] text-right text-[14.2px] leading-5 whitespace-nowrap">
        <div className="tracking-[0.3px]">9:35 AM</div>
        <div className="tracking-[0.26px]">9/21/2023</div>
      </div>
      <span className="ml-[7px] flex h-5 w-6 items-center justify-center rounded-full bg-[#0a90ff] text-[12px] text-black">30</span>
    </div>
  </footer>
);

export default function App() {
  return (
    <div className="flex h-[1080px] w-[1920px] flex-col overflow-hidden bg-white font-['Open_Sans','Noto_Sans',sans-serif]">
      <TabStrip />
      <Toolbar />
      <BookmarksBar />
      <WebPage />
      <Taskbar />
    </div>
  );
}
